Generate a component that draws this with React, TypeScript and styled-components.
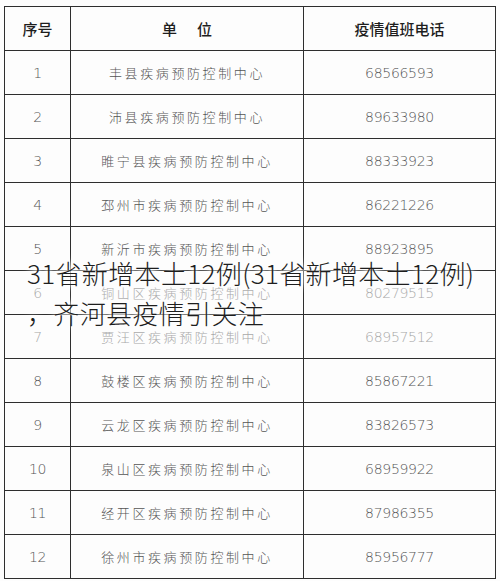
import React, { FC } from 'react';
import styled, { createGlobalStyle } from 'styled-components';

const GlobalStyle = createGlobalStyle`
  html, body {
    margin: 0;
    padding: 0;
    background: #fdfdfd;
  }
  body {
    font-family: "Noto Sans CJK SC", "Noto Sans", sans-serif;
  }
`;

const Root = styled.div`
  position: relative;
  width: 500px;
  height: 581px;
  padding: 6px 0 0 4px;
  box-sizing: border-box;
  overflow: hidden;
`;

const Table = styled.div`
  display: grid;
  grid-template-columns: 66px 233px 192px;
  width: 491px;
  border-top: 1px solid #2e2e2e;
  border-left: 1px solid #2e2e2e;
`;

const Cell = styled.div<{ $faded?: boolean; $head?: boolean; $spaced?: boolean }>`
  height: 44px;
  box-sizing: border-box;
  border-right: 1px solid #2e2e2e;
  border-bottom: 1px solid #2e2e2e;
  display: flex;
  align-items: center;
  justify-content: center;
  font-family: ${p => (p.$spaced || p.$head ? '"Noto Sans CJK SC", sans-serif' : '"DejaVu Sans", "Noto Sans", sans-serif')};
  font-size: ${p => (p.$head ? '15px' : p.$spaced ? '13px' : '14px')};
  font-weight: ${p => (p.$head ? 500 : 300)};
  letter-spacing: ${p => (p.$spaced ? '2.6px' : p.$head ? '0' : '-0.3px')};
  color: ${p => (p.$head ? '#1e1e1e' : p.$faded ? '#a8a8a8' : '#555')};
`;

const HeadSpacer = styled.span`
  display: inline-block;
  width: 20px;
`;

const Overlay = styled.div`
  position: absolute;
  left: 27px;
  top: 253px;
  width: 473px;
  font-family: "Noto Sans CJK SC", sans-serif;
  font-size: 26px;
  font-weight: 300;
  line-height: 40px;
  color: #1e1e1e;
  letter-spacing: 0.35px;
  text-shadow: 0 0 4px #fff, 0 0 8px #fff, 0 0 12px rgba(255, 255, 255, 0.9);
`;

interface Row {
  no: string;
  unit: string;
  phone: string;
}

const rows: Row[] = [
  { no: '1', unit: '丰县疾病预防控制中心', phone: '68566593' },
  { no: '2', unit: '沛县疾病预防控制中心', phone: '89633980' },
  { no: '3', unit: '睢宁县疾病预防控制中心', phone: '88333923' },
  { no: '4', unit: '邳州市疾病预防控制中心', phone: '86221226' },
  { no: '5', unit: '新沂市疾病预防控制中心', phone: '88923895' },
  { no: '6', unit: '铜山区疾病预防控制中心', phone: '80279515' },
  { no: '7', unit: '贾汪区疾病预防控制中心', phone: '68957512' },
  { no: '8', unit: '鼓楼区疾病预防控制中心', phone: '85867221' },
  { no: '9', unit: '云龙区疾病预防控制中心', phone: '83826573' },
  { no: '10', unit: '泉山区疾病预防控制中心', phone: '68959922' },
  { no: '11', unit: '经开区疾病预防控制中心', phone: '87986355' },
  { no: '12', unit: '徐州市疾病预防控制中心', phone: '85956777' },
];

const App: FC = () => {
  return (
    <Root>
      <GlobalStyle />
      <Table>
        <Cell $head>序号</Cell>
        <Cell $head>单<HeadSpacer />位</Cell>
        <Cell $head>疫情值班电话</Cell>
        {rows.map(r => {
          const faded = r.no === '6' || r.no === '7';
          return (
            <React.Fragment key={r.no}>
              <Cell $faded={faded}>{r.no}</Cell>
              <Cell $faded={faded} $spaced>{r.unit}</Cell>
              <Cell $faded={faded}>{r.phone}</Cell>
            </React.Fragment>
          );
        })}
      </Table>
      <Overlay>
        31省新增本土12例(31省新增本土12例)
        <br />
        ，齐河县疫情引关注
      </Overlay>
    </Root>
  );
};

export default App;
